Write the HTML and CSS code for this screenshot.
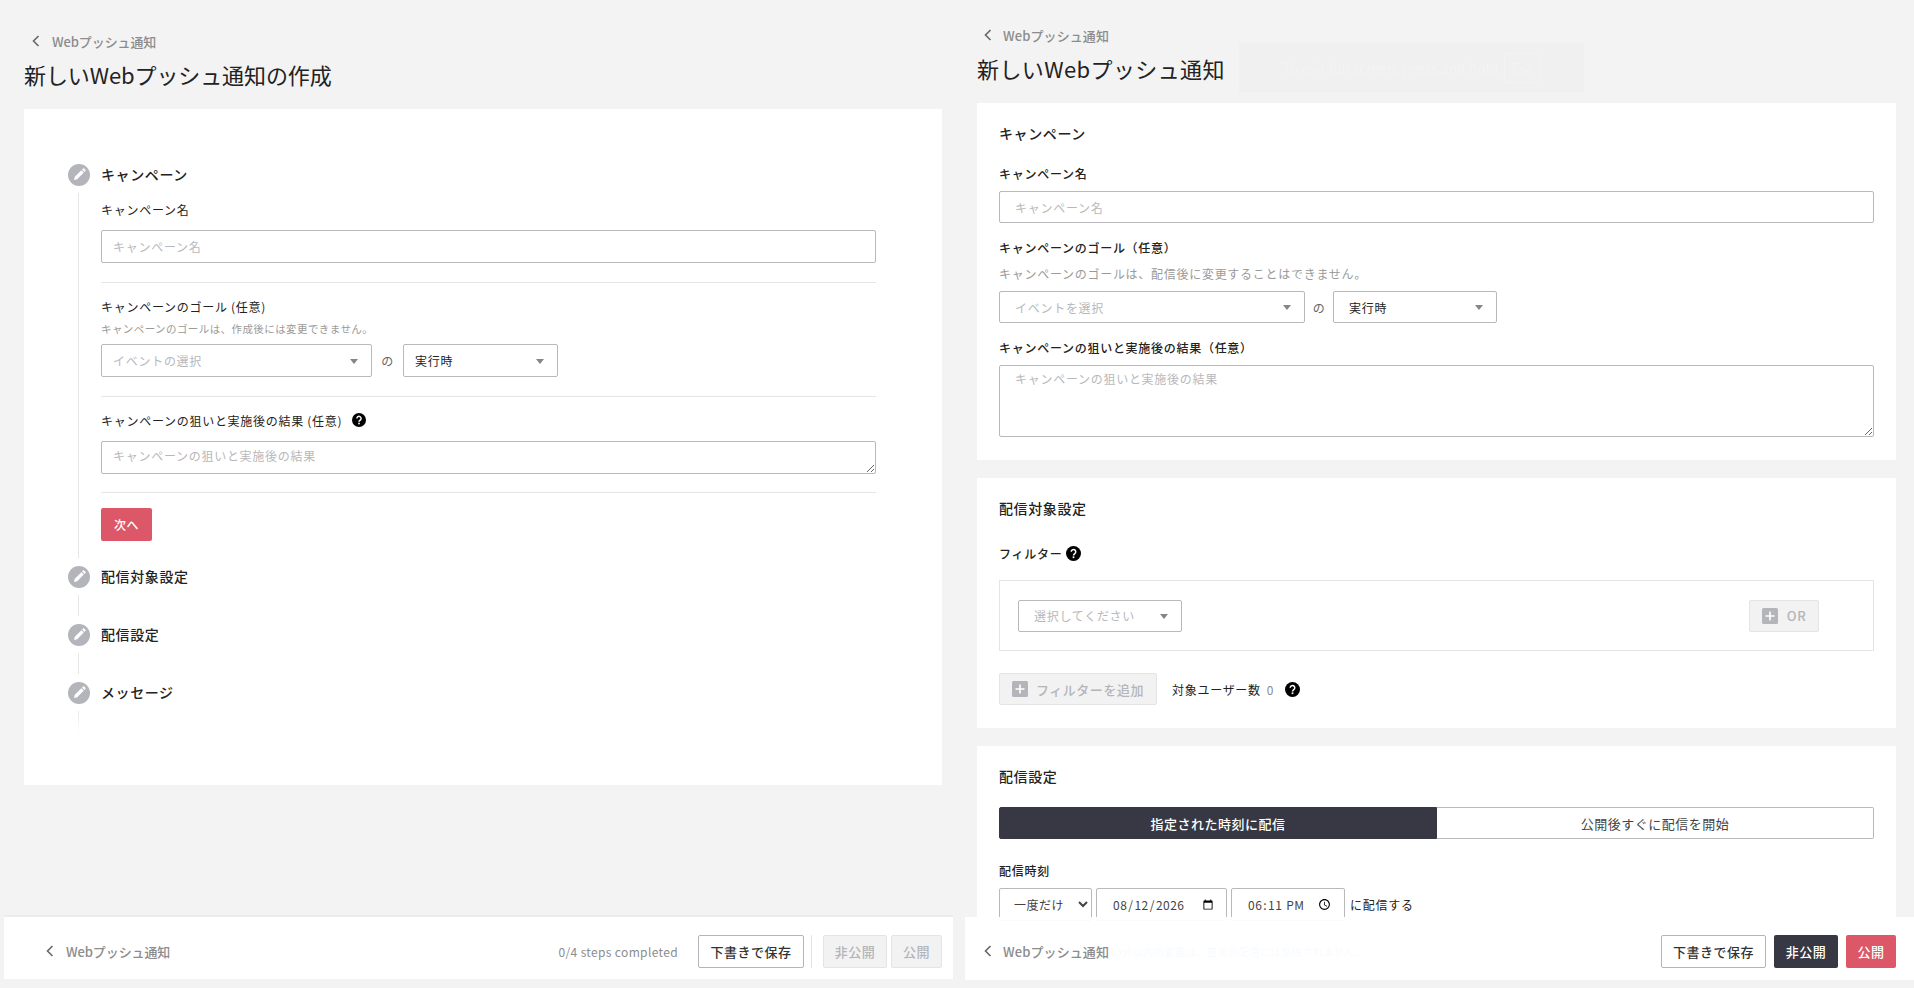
FILE: index.html
```html
<!DOCTYPE html>
<html lang="ja">
<head>
    <meta charset="UTF-8">
    <meta name="viewport" content="width=device-width, initial-scale=1.0">
    <title>新しいWebプッシュ通知</title>
    <link rel="stylesheet" href="styles.css">
</head>
<body>
    <!-- Ícones reutilizados -->
    <svg class="defs" width="0" height="0">
        <symbol id="i-chevron" viewBox="0 0 10 14"><path d="M7.5 2 2.5 7l5 5" fill="none" stroke="currentColor" stroke-width="1.6"/></symbol>
        <symbol id="i-pencil" viewBox="0 0 22 22"><circle cx="11" cy="11" r="11" fill="#b4b5ba"/><path d="M6 16l.8-3.2 6.6-6.6 2.4 2.4-6.6 6.6z M14.1 5.5l.9-.9a.9.9 0 0 1 1.2 0l1.2 1.2a.9.9 0 0 1 0 1.2l-.9.9z" fill="#fff"/></symbol>
        <symbol id="i-help" viewBox="0 0 14 14"><circle cx="7" cy="7" r="7" fill="#000"/><path d="M4.9 5.4a2.1 2.1 0 1 1 3.3 1.7c-.8.6-1.2.9-1.2 1.7" fill="none" stroke="#fff" stroke-width="1.4"/><rect x="6.2" y="9.7" width="1.6" height="1.6" fill="#fff"/></symbol>
        <symbol id="i-plus" viewBox="0 0 16 16"><rect width="16" height="16" rx="1.5" fill="#b4b5ba"/><path d="M8 3.5v9M3.5 8h9" stroke="#fff" stroke-width="1.6"/></symbol>
    </svg>

    <!-- Painel esquerdo: criação em etapas -->
    <div class="panel panel-left">
        <div class="page">
            <a class="crumb" href="#"><svg class="chevron"><use href="#i-chevron"/></svg>Webプッシュ通知</a>
            <h1 class="page-title">新しいWebプッシュ通知の作成</h1>

            <section class="card wizard">
                <div class="step-head"><svg class="step-icon"><use href="#i-pencil"/></svg><h2>キャンペーン</h2></div>
                <div class="step-body step-open">
                    <label class="lbl">キャンペーン名</label>
                    <input class="field" type="text" placeholder="キャンペーン名">
                    <hr class="rule">
                    <label class="lbl">キャンペーンのゴール (任意)</label>
                    <p class="hint">キャンペーンのゴールは、作成後には変更できません。</p>
                    <div class="goal-row">
                        <div class="pick pick-event placeholder">イベントの選択<i class="caret"></i></div>
                        <span class="of">の</span>
                        <div class="pick pick-when">実行時<i class="caret"></i></div>
                    </div>
                    <hr class="rule">
                    <label class="lbl lbl-help">キャンペーンの狙いと実施後の結果 (任意)<svg class="help"><use href="#i-help"/></svg></label>
                    <textarea class="field area" placeholder="キャンペーンの狙いと実施後の結果"></textarea>
                    <hr class="rule rule-last">
                    <button class="btn btn-red btn-next">次へ</button>
                </div>
                <div class="step-head"><svg class="step-icon"><use href="#i-pencil"/></svg><h2>配信対象設定</h2></div>
                <div class="step-body"></div>
                <div class="step-head"><svg class="step-icon"><use href="#i-pencil"/></svg><h2>配信設定</h2></div>
                <div class="step-body"></div>
                <div class="step-head"><svg class="step-icon"><use href="#i-pencil"/></svg><h2>メッセージ</h2></div>
                <div class="step-body step-end"></div>
            </section>
        </div>

        <footer class="bar">
            <a class="crumb" href="#"><svg class="chevron"><use href="#i-chevron"/></svg>Webプッシュ通知</a>
            <span class="progress">0/4 steps completed</span>
            <button class="btn btn-line">下書きで保存</button>
            <span class="bar-sep"></span>
            <button class="btn btn-off">非公開</button>
            <button class="btn btn-off">公開</button>
        </footer>
    </div>

    <!-- Painel direito: formulário completo -->
    <div class="panel panel-right">
        <div class="page">
            <a class="crumb" href="#"><svg class="chevron"><use href="#i-chevron"/></svg>Webプッシュ通知</a>
            <h1 class="page-title">新しいWebプッシュ通知</h1>

            <section class="card block">
                <h2>キャンペーン</h2>
                <label class="lbl first">キャンペーン名</label>
                <input class="field" type="text" placeholder="キャンペーン名">
                <label class="lbl">キャンペーンのゴール（任意）</label>
                <p class="hint">キャンペーンのゴールは、配信後に変更することはできません。</p>
                <div class="goal-row">
                    <div class="pick pick-event placeholder">イベントを選択<i class="caret"></i></div>
                    <span class="of">の</span>
                    <div class="pick pick-when">実行時<i class="caret"></i></div>
                </div>
                <label class="lbl">キャンペーンの狙いと実施後の結果（任意）</label>
                <textarea class="field area" placeholder="キャンペーンの狙いと実施後の結果"></textarea>
            </section>

            <section class="card block block-target">
                <h2>配信対象設定</h2>
                <label class="lbl first filter-lbl">フィルター<svg class="help"><use href="#i-help"/></svg></label>
                <div class="filter-box">
                    <div class="pick pick-filter placeholder">選択してください<i class="caret"></i></div>
                    <button class="btn btn-off btn-or"><svg class="plus"><use href="#i-plus"/></svg>OR</button>
                </div>
                <div class="count-row">
                    <button class="btn btn-off btn-add"><svg class="plus"><use href="#i-plus"/></svg>フィルターを追加</button>
                    <span class="count-lbl">対象ユーザー数</span>
                    <span class="count-num">0</span>
                    <svg class="help"><use href="#i-help"/></svg>
                </div>
            </section>

            <section class="card block">
                <h2>配信設定</h2>
                <div class="segment">
                    <button class="seg seg-on">指定された時刻に配信</button>
                    <button class="seg">公開後すぐに配信を開始</button>
                </div>
                <label class="lbl time-lbl">配信時刻</label>
                <div class="time-row">
                    <select class="native n-once"><option>一度だけ</option></select>
                    <input class="native n-date" type="date" value="2026-08-12">
                    <input class="native n-time" type="time" value="18:11">
                    <span class="time-tail">に配信する</span>
                </div>
                <p class="notice"><span class="notice-dot"></span>15分以内の変更は、直後の配信には反映されません。</p>
            </section>
        </div>

        <div class="exit-hint">To exit full screen, press and hold <span class="key">Esc</span></div>

        <footer class="bar">
            <a class="crumb" href="#"><svg class="chevron"><use href="#i-chevron"/></svg>Webプッシュ通知</a>
            <button class="btn btn-line bar-push">下書きで保存</button>
            <button class="btn btn-dark">非公開</button>
            <button class="btn btn-red">公開</button>
        </footer>
    </div>
</body>
</html>
```

FILE: styles.css
```css
/* Base */
* {
    margin: 0;
    padding: 0;
    box-sizing: border-box;
    font-family: "Noto Sans CJK JP", "Noto Sans", sans-serif;
}

body {
    display: flex;
    height: 988px;
    overflow: hidden;
    background-color: #f3f3f3;
    color: #222;
    font-size: 12px;
    letter-spacing: 0.06em;
}

a {
    text-decoration: none;
    color: inherit;
}

.defs {
    position: absolute;
}

/* Painéis */
.panel {
    position: relative;
    width: 957px;
    height: 988px;
}

.page {
    height: 980px;
    overflow: hidden;
}

.panel-left .page {
    padding: 31px 15px 0 24px;
}

.panel-right .page {
    padding: 25px 18px 0 20px;
}

.crumb {
    display: flex;
    align-items: center;
    height: 20px;
    color: #8c8c8c;
    font-size: 13px;
    font-weight: 500;
    letter-spacing: -0.1px;
}

.panel-right .crumb {
    letter-spacing: 0.1px;
}

.chevron {
    width: 10px;
    height: 14px;
    margin-right: 11px;
    color: #666;
}

.panel-right .chevron {
    margin-right: 10px;
}

.panel-left .page > .crumb {
    padding-left: 7px;
}

.panel-right .page > .crumb {
    padding-left: 6px;
}

.page-title {
    height: 32px;
    margin: 7px 0 19px;
    font-size: 22px;
    font-weight: 400;
    line-height: 32px;
    letter-spacing: -0.1px;
    color: #222;
}

.panel-right .page-title {
    letter-spacing: 0.4px;
}

.card {
    background-color: white;
}

h2 {
    height: 20px;
    font-size: 14px;
    font-weight: 500;
    line-height: 18px;
    letter-spacing: 0.6px;
}

/* Campos */
.lbl {
    display: flex;
    align-items: center;
    height: 20px;
    padding-bottom: 2px;
    font-size: 12px;
}

.field {
    display: block;
    width: 100%;
    height: 33px;
    padding: 0 11px;
    border: 1px solid #b9b9bd;
    border-radius: 2px;
    background-color: white;
    font-size: 12px;
    letter-spacing: 0.06em;
    color: #222;
    outline: none;
}

.field::placeholder {
    color: #b8b8bc;
}

.area {
    padding-top: 5px;
    line-height: 18px;
}

.hint {
    height: 16px;
    color: #9a9a9a;
    line-height: 14px;
}

.goal-row {
    display: flex;
    align-items: center;
}

.pick {
    position: relative;
    display: flex;
    align-items: center;
    height: 33px;
    padding: 0 11px;
    border: 1px solid #b9b9bd;
    border-radius: 2px;
    background-color: white;
    font-size: 12px;
    color: #222;
}

.placeholder {
    color: #b8b8bc;
}

.caret {
    position: absolute;
    top: 14px;
    right: 13px;
    border-left: 4px solid transparent;
    border-right: 4px solid transparent;
    border-top: 5px solid #85858c;
}

.of {
    color: #666;
    text-align: center;
}

.help {
    flex: none;
    width: 14px;
    height: 14px;
}

/* Botões */
.btn {
    display: inline-flex;
    align-items: center;
    justify-content: center;
    height: 33px;
    border: 1px solid transparent;
    border-radius: 2px;
    font-size: 13px;
    font-weight: 500;
    letter-spacing: 0.04em;
}

.btn-red {
    background-color: #dc5767;
    color: white;
}

.btn-dark {
    background-color: #373843;
    color: white;
}

.btn-line {
    width: 106px;
    background-color: white;
    border-color: #b4b5ba;
    color: #333;
}

.btn-off {
    background-color: #f2f2f2;
    border-color: #e4e4e4;
    color: #b4b5ba;
}

/* Assistente (esquerda) */
.wizard {
    height: 676px;
    padding: 55px 66px 0 44px;
}

.step-head {
    display: flex;
    align-items: center;
    gap: 11px;
    height: 22px;
}

.step-icon {
    flex: none;
    width: 22px;
    height: 22px;
}

.step-body {
    height: 21px;
    margin: 7px 0 8px 10px;
    border-left: 1px solid #e6e6e6;
}

.step-end {
    border-image: linear-gradient(#e6e6e6, white) 1;
}

.step-open {
    height: 365px;
    padding: 7px 0 0 22px;
}

.step-open .field {
    margin-top: 10px;
}

.rule {
    height: 1px;
    margin: 19px 0 14px;
    border: none;
    background-color: #e6e6e6;
}

.step-open .hint {
    margin-top: 5px;
    font-size: 10.5px;
    letter-spacing: 0.42px;
}

.step-open .goal-row {
    margin-top: 6px;
}

.panel-left .pick-event {
    width: 271px;
}

.panel-left .pick-when {
    width: 155px;
}

.panel-left .of {
    width: 31px;
}

.lbl-help .help {
    margin-left: 10px;
}

.rule-last {
    margin: 18px 0 15px;
}

.btn-next {
    width: 51px;
    height: 33px;
    font-size: 12px;
}

/* Blocos (direita) */
.block {
    margin-bottom: 18px;
    padding: 21px 22px 23px;
}

.block .lbl {
    margin-top: 15px;
    font-weight: 500;
}

.block .lbl.first {
    margin-top: 20px;
}

.block .field {
    height: 32px;
    margin-top: 7px;
    padding: 0 15px;
}

.block .area {
    height: 72px;
    padding-top: 4px;
}

.block .hint {
    margin-top: 9px;
}

.block .goal-row {
    margin-top: 8px;
}

.block .pick {
    height: 32px;
    padding: 0 15px;
}

.block .caret {
    top: 13px;
}

.block .pick-event {
    width: 306px;
}

.block .pick-when {
    width: 164px;
}

.block .of {
    width: 28px;
}

.block-target {
    padding-bottom: 24px;
}

.block .lbl.filter-lbl {
    margin-top: 25px;
    gap: 4px;
}

.block .help {
    width: 15px;
    height: 15px;
}

.filter-box {
    display: flex;
    align-items: center;
    justify-content: space-between;
    height: 71px;
    margin-top: 16px;
    padding: 0 54px 0 18px;
    border: 1px solid #e4e4e4;
}

.pick-filter {
    width: 164px;
}

.btn-or {
    width: 70px;
    height: 32px;
    gap: 9px;
    color: #b4b5ba;
    letter-spacing: 0.04em;
}

.plus {
    width: 16px;
    height: 16px;
}

.count-row {
    display: flex;
    align-items: center;
    margin: 22px 0 -1px;
}

.btn-add {
    width: 158px;
    height: 32px;
    gap: 8px;
}

.count-lbl {
    margin-left: 15px;
}

.count-num {
    margin: 0 11px 0 6px;
    color: #8c8c8c;
}

.segment {
    display: flex;
    height: 32px;
    margin-top: 20px;
}

.seg {
    flex: 1;
    border: 1px solid #b9b9bd;
    background-color: white;
    font-size: 13px;
    font-weight: 400;
    letter-spacing: 0.04em;
    color: #444;
}

.seg:last-child {
    border-left: none;
    border-radius: 0 2px 2px 0;
}

.seg-on {
    background-color: #373843;
    border-color: #373843;
    border-radius: 2px 0 0 2px;
    font-weight: 500;
    color: white;
}

.block .lbl.time-lbl {
    margin-top: 22px;
}

.time-row {
    display: flex;
    align-items: center;
    gap: 4px;
    margin-top: 7px;
}

.native {
    height: 33px;
    border: 1px solid #b9b9bd;
    border-radius: 2px;
    background-color: white;
    font-size: 12px;
    letter-spacing: 0.04em;
    color: #444;
}

.n-once {
    width: 93px;
    padding-left: 10px;
}

.n-date {
    width: 131px;
    padding: 0 10px 0 15px;
}

.n-time {
    width: 114px;
    padding: 0 10px 0 15px;
}

.time-tail {
    margin-left: 1px;
}

.notice {
    display: flex;
    align-items: center;
    margin-top: 23px;
    font-size: 10.5px;
    line-height: 16px;
    letter-spacing: 0.1px;
    color: #8fbbe8;
}

.notice-dot {
    width: 12px;
    height: 12px;
    margin-right: 99px;
    border: 1px solid #8fbbe8;
    border-radius: 50%;
}

/* Aviso de tela cheia, sobre o conteúdo */
.exit-hint {
    position: absolute;
    top: 43px;
    left: 282px;
    display: flex;
    align-items: center;
    justify-content: center;
    width: 345px;
    height: 49px;
    background-color: rgba(0, 0, 0, 0.012);
    font-size: 14px;
    letter-spacing: 0;
    color: rgba(255, 255, 255, 0.25);
}

.key {
    margin-left: 6px;
    padding: 4px 6px;
    border: 1px solid rgba(255, 255, 255, 0.2);
}

/* Barra inferior, fixa sobre a página */
.bar {
    position: absolute;
    display: flex;
    align-items: center;
}

.panel-left .bar {
    left: 4px;
    right: 4px;
    bottom: 9px;
    height: 64px;
    padding: 6px 11px 0 41px;
    border-top: 2px solid #ececec;
    background-color: white;
}

.panel-left .bar .crumb {
    margin-right: auto;
}

.panel-right .bar {
    left: 8px;
    right: 0;
    bottom: 8px;
    height: 63px;
    padding: 5px 18px 0;
    background-color: rgba(255, 255, 255, 0.93);
}

.progress {
    margin-right: 20px;
    letter-spacing: 0.35px;
    color: #8c8c8c;
}

.bar-sep {
    width: 1px;
    height: 33px;
    margin: 0 11px 0 7px;
    background-color: #e4e4e4;
}

.bar .btn-off {
    width: 64px;
}

.bar .btn-off:last-child {
    width: 51px;
    margin-left: 4px;
}

.bar-push {
    width: 105px;
    margin-left: auto;
}

.bar .btn-dark {
    width: 64px;
    margin-left: 8px;
}

.panel-right .bar .btn-red {
    width: 50px;
    margin-left: 8px;
}
```
